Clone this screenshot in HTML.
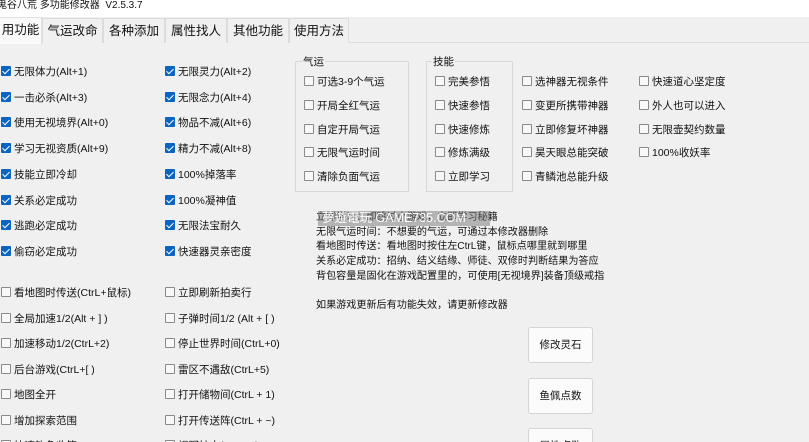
<!DOCTYPE html>
<html><head><meta charset="utf-8"><style>
*{margin:0;padding:0;box-sizing:border-box}
html,body{width:809px;height:442px;overflow:hidden}
body{background:#f0f0f0;position:relative;font-family:"Liberation Sans","Noto Sans CJK SC",sans-serif;font-size:10.5px;color:#111}
.t{position:absolute;white-space:nowrap}
.title{position:absolute;left:0;top:0;width:809px;height:17px;background:#fff;font-size:10px;line-height:11px;text-indent:-3px;color:#111;white-space:nowrap}
.tabs{position:absolute;left:0;top:17px;width:809px;height:26px;background:#f0f0f0;border-bottom:1px solid #dcdcdc}
.tab{position:absolute;top:1px;height:25px;font-size:12.5px;line-height:24px;text-align:center;border:1px solid #dcdcdc;border-bottom:none;background:#f0f0f0}
.tab.sel{background:#f9f9f9;top:0;height:27px;border-color:#e0e0e0}
.cb{position:absolute;width:10px;height:10px;border:1px solid #8a8a8a;background:#f8f8f8;border-radius:1px}
.cb.on{background:#0a64c2;border-color:#0a64c2}
.cb.on:after{content:"";position:absolute;left:2px;top:0px;width:3px;height:6px;border:solid #fff;border-width:0 1.5px 1.5px 0;transform:rotate(45deg)}
.grp{position:absolute;border:1px solid #d8d8d8}
.gl{position:absolute;background:#f0f0f0;font-size:10.5px;padding:0 1px}
.btn{position:absolute;width:65px;height:36px;background:#fbfbfb;border:1px solid #d4d4d4;border-radius:3px;text-align:center;line-height:34px;font-size:10.5px}
.help{position:absolute;left:316px;top:211px;font-size:10.1px;line-height:14.7px;white-space:nowrap}
</style></head><body>
<div class="title">鬼谷八荒 多功能修改器&nbsp; V2.5.3.7</div>
<div class="tabs">
<div class="tab sel" style="left:-1px;width:43px">用功能</div>
<div class="tab" style="left:42px;width:61px">气运改命</div>
<div class="tab" style="left:103px;width:62px">各种添加</div>
<div class="tab" style="left:165px;width:62px">属性找人</div>
<div class="tab" style="left:227px;width:62px">其他功能</div>
<div class="tab" style="left:289px;width:60px">使用方法</div>
</div>
<div id="c"></div>
<div class="grp" style="left:295px;top:61px;width:114px;height:131px"></div>
<div class="gl" style="left:302px;top:54px">气运</div>
<div class="grp" style="left:426px;top:61px;width:87px;height:131px"></div>
<div class="gl" style="left:432px;top:54px">技能</div>
<div class="help">立即学习：即跳过小游戏，立即学习秘籍<br>无限气运时间：不想要的气运，可通过本修改器删除<br>看地图时传送：看地图时按住左CtrL键，鼠标点哪里就到哪里<br>关系必定成功：招纳、结义结缘、师徒、双修时判断结果为答应<br>背包容量是固化在游戏配置里的，可使用[无视境界]装备顶级戒指<br><br>如果游戏更新后有功能失效，请更新修改器</div>
<div class="t" style="left:318px;top:211px;width:172px;height:15px;background:rgba(120,120,120,.5);color:#fff;font-size:12.5px;line-height:15px;padding-left:4px">夢遊電玩 GAME735.COM</div>
<div class="btn" style="left:528px;top:327px">修改灵石</div>
<div class="btn" style="left:528px;top:378px">鱼佩点数</div>
<div class="btn" style="left:528px;top:428px">属性点数</div>
<script>
var c=document.getElementById('c'),h='';
function cb(x,y,t,on){h+='<div class="cb'+(on?' on':'')+'" style="left:'+x+'px;top:'+(y-5)+'px"></div><div class="t" style="left:'+(x+13)+'px;top:'+(y-7)+'px">'+t+'</div>';}
var L=['无限体力(Alt+1)','一击必杀(Alt+3)','使用无视境界(Alt+0)','学习无视资质(Alt+9)','技能立即冷却','关系必定成功','逃跑必定成功','偷窃必定成功'];
var R=['无限灵力(Alt+2)','无限念力(Alt+4)','物品不减(Alt+6)','精力不减(Alt+8)','100%掉落率','100%凝神值','无限法宝耐久','快速器灵亲密度'];
for(var i=0;i<8;i++){var y=71+i*25.7;cb(1,y,L[i],1);cb(165,y,R[i],1);}
var L2=['看地图时传送(CtrL+鼠标)','全局加速1/2(Alt + ] )','加速移动1/2(CtrL+2)','后台游戏(CtrL+[ )','地图全开','增加探索范围','快速钓鱼收竿'];
var R2=['立即刷新拍卖行','子弹时间1/2 (Alt + [ )','停止世界时间(CtrL+0)','雷区不遇敌(CtrL+5)','打开储物间(CtrL + 1)','打开传送阵(CtrL + ~)','视野扩大(CtrL+9)'];
for(var i=0;i<7;i++){var y=292+i*25.5;cb(1,y,L2[i],0);cb(165,y,R2[i],0);}
var G=['可选3-9个气运','开局全红气运','自定开局气运','无限气运时间','清除负面气运'];
var S=['完美参悟','快速参悟','快速修炼','修炼满级','立即学习'];
var S3=['选神器无视条件','变更所携带神器','立即修复坏神器','昊天眼总能突破','青鳞池总能升级'];
var S4=['快速道心坚定度','外人也可以进入','无限壶契约数量','100%收妖率'];
for(var i=0;i<5;i++){var y=81+i*23.8;cb(304,y,G[i],0);cb(435,y,S[i],0);cb(522,y,S3[i],0);if(S4[i])cb(639,y,S4[i],0);}
c.innerHTML=h;
</script>
</body></html>
